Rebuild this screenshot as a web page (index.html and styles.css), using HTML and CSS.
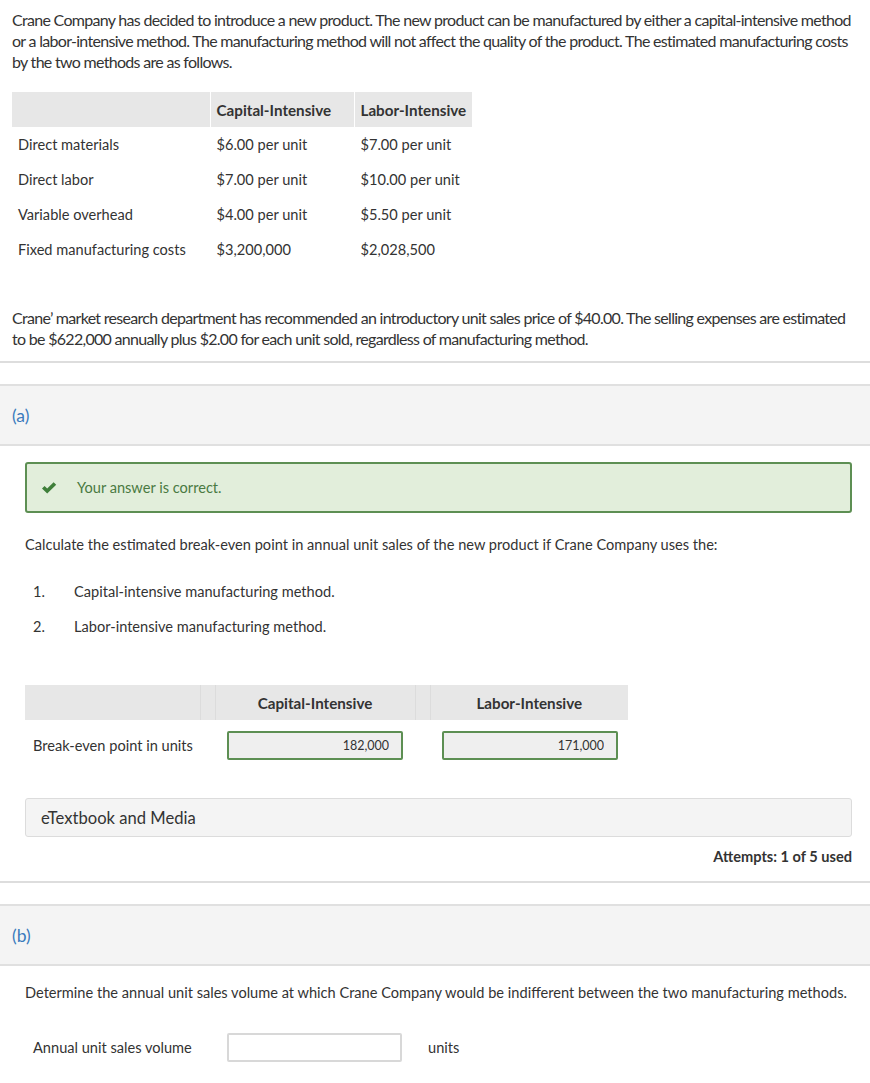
FILE: index.html
```html
<!DOCTYPE html>
<html lang="en">
<head>
    <meta charset="UTF-8">
    <meta name="viewport" content="width=device-width, initial-scale=1.0">
    <title>Crane Company - Break-even</title>
    <link rel="stylesheet" href="styles.css">
</head>
<body>

<div class="intro">
    <p class="lead">Crane Company has decided to introduce a new product. The new product can be manufactured by either a capital-intensive method or a labor-intensive method. The manufacturing method will not affect the quality of the product. The estimated manufacturing costs by the two methods are as follows.</p>

    <table class="costs">
        <thead>
            <tr>
                <th class="label"></th>
                <th class="cap">Capital-Intensive</th>
                <th class="lab">Labor-Intensive</th>
            </tr>
        </thead>
        <tbody>
            <tr><td>Direct materials</td><td>$6.00 per unit</td><td>$7.00 per unit</td></tr>
            <tr><td>Direct labor</td><td>$7.00 per unit</td><td>$10.00 per unit</td></tr>
            <tr><td>Variable overhead</td><td>$4.00 per unit</td><td>$5.50 per unit</td></tr>
            <tr><td>Fixed manufacturing costs</td><td>$3,200,000</td><td>$2,028,500</td></tr>
        </tbody>
    </table>

    <p class="lead second">Crane&rsquo; market research department has recommended an introductory unit sales price of $40.00. The selling expenses are estimated to be $622,000 annually plus $2.00 for each unit sold, regardless of manufacturing method.</p>
</div>

<div class="part">
    <div class="part-head">(a)</div>
    <div class="part-body">
        <div class="correct">
            <svg class="check" width="16" height="14" viewBox="0 0 16 14">
                <path d="M1 7.5 L3.6 5 L6.2 7.6 L12.6 1.2 L15.2 3.7 L6.2 12.6 Z" fill="#3f7f3a"/>
            </svg>
            <span>Your answer is correct.</span>
        </div>

        <p class="question">Calculate the estimated break-even point in annual unit sales of the new product if Crane Company uses the:</p>

        <ol class="methods">
            <li><span class="num">1.</span>Capital-intensive manufacturing method.</li>
            <li><span class="num">2.</span>Labor-intensive manufacturing method.</li>
        </ol>

        <table class="answers">
            <thead>
                <tr>
                    <th class="a-label"></th>
                    <th class="gap"></th>
                    <th class="a-col">Capital-Intensive</th>
                    <th class="gap"></th>
                    <th class="a-col">Labor-Intensive</th>
                </tr>
            </thead>
            <tbody>
                <tr>
                    <td class="a-label">Break-even point in units</td>
                    <td></td>
                    <td class="a-cell"><input class="ans ok" type="text" value="182,000" readonly></td>
                    <td></td>
                    <td class="a-cell"><input class="ans ok" type="text" value="171,000" readonly></td>
                </tr>
            </tbody>
        </table>

        <div class="media">eTextbook and Media</div>
        <div class="attempts">Attempts: 1 of 5 used</div>
    </div>
</div>

<div class="part">
    <div class="part-head">(b)</div>
    <div class="part-body">
        <p class="question first">Determine the annual unit sales volume at which Crane Company would be indifferent between the two manufacturing methods.</p>
        <div class="volume">
            <span class="v-label">Annual unit sales volume</span>
            <input class="ans blank" type="text">
            <span class="v-unit">units</span>
        </div>
    </div>
</div>

</body>
</html>
```

FILE: styles.css
```css
* {
    margin: 0;
    padding: 0;
    box-sizing: border-box;
}
body {
    font-family: Lato, 'Open Sans', sans-serif;
    font-size: 14.6px;
    color: #333;
    background: #fff;
}

.intro {
    padding: 9px 12px 12px 12px;
    border-bottom: 2px solid #ddd;
}

.lead {
    font-size: 16px;
    line-height: 21px;
    letter-spacing: -0.7px;
}

.lead.second {
    margin-top: 40px;
}

.costs {
    border-collapse: collapse;
    margin-top: 20px;
}

.costs th {
    background: #e7e7e7;
    height: 35px;
    text-align: left;
    font-size: 15.2px;
    font-weight: 700;
    padding: 0 6px;
    border-left: 1px solid #fff;
}

.costs th.label {
    width: 198px;
    border-left: none;
}

.costs th.cap {
    width: 144px;
}

.costs th.lab {
    width: 118px;
    padding-right: 0;
}

.costs td {
    height: 35px;
    padding: 0 6px;
    border-left: 1px solid transparent;
}

.costs td:first-child {
    border-left: none;
}

.part {
    margin-top: 21px;
}

.part-head {
    background: #f4f4f4;
    border-top: 2px solid #e0e0e0;
    border-bottom: 2px solid #e0e0e0;
    height: 62px;
    display: flex;
    align-items: center;
    padding-left: 12px;
    color: #3a7bbd;
    font-size: 17.5px;
}

.part-body {
    padding: 16px 18px 0 25px;
}

.correct {
    display: flex;
    align-items: center;
    height: 51px;
    background: #e2eedb;
    border: 2px solid #5d8f53;
    border-radius: 3px;
    padding-left: 14px;
    color: #4a7a42;
}

.check {
    margin-right: 20px;
}

.question {
    margin-top: 21px;
    line-height: 21px;
}

.question.first {
    margin-top: 0;
}

.methods {
    list-style: none;
    margin-top: 26px;
    padding-left: 8px;
}

.methods li {
    line-height: 21px;
    margin-bottom: 14px;
}

.methods .num {
    display: inline-block;
    width: 41px;
}

.answers {
    border-collapse: collapse;
    margin-top: 48px;
}

.answers th {
    background: #e7e7e7;
    height: 35px;
    font-size: 15.2px;
    font-weight: 700;
    text-align: center;
}

.answers th.a-label {
    width: 175px;
}

.answers th.gap {
    width: 15px;
    border-left: 1px solid #dcdcdc;
    border-right: 1px solid #dcdcdc;
}

.answers th.a-col {
    width: 200px;
}

.answers th.a-col:last-child {
    width: 198px;
}

.answers td {
    height: 50px;
}

.answers td.a-label {
    padding-left: 8px;
}

.answers td.a-cell {
    padding-left: 12px;
}

.ans {
    width: 176px;
    height: 29px;
    font-family: Lato, 'Open Sans', sans-serif;
    font-size: 12.5px;
    color: #333;
    text-align: right;
    padding-right: 12px;
    border-radius: 2px;
    outline: none;
}

.ans.ok {
    background: #efefef;
    border: 2px solid #5d8f53;
}

.ans.blank {
    width: 175px;
    background: #fff;
    border: 2px solid #d8d8d8;
}

.media {
    margin-top: 28px;
    height: 39px;
    background: #f4f4f4;
    border: 1px solid #dcdcdc;
    border-radius: 3px;
    display: flex;
    align-items: center;
    padding-left: 15px;
    font-size: 16.6px;
}

.attempts {
    text-align: right;
    font-weight: 700;
    margin-top: 11px;
    padding-bottom: 16px;
    border-bottom: 2px solid #ddd;
    margin-right: -18px;
    margin-left: -25px;
    padding-right: 18px;
}

.volume {
    display: flex;
    align-items: center;
    margin-top: 30px;
    padding-left: 8px;
}

.v-label {
    width: 194px;
}

.v-unit {
    margin-left: 26px;
}
```
